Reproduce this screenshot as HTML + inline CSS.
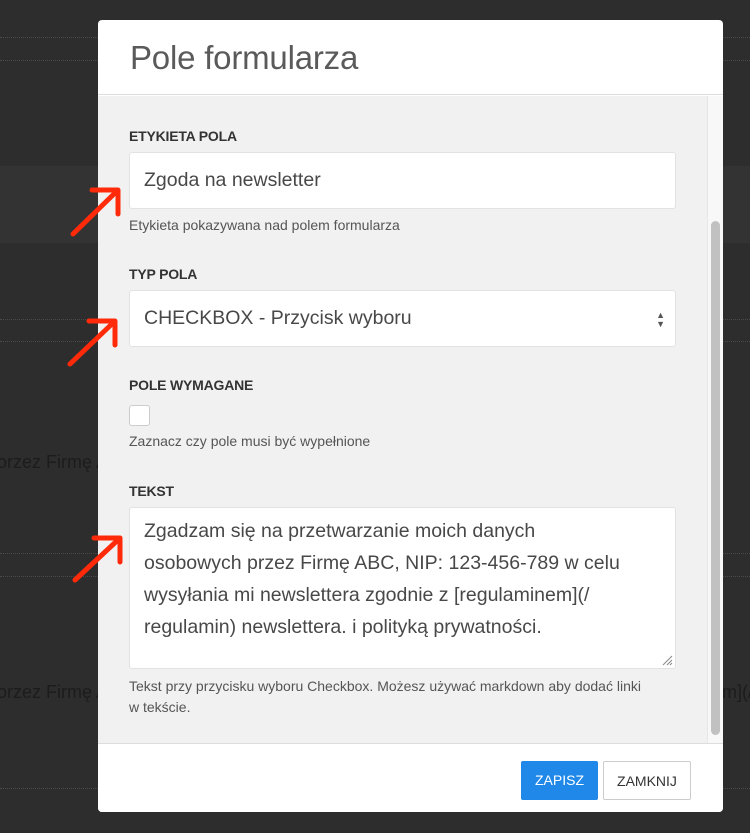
<!DOCTYPE html>
<html><head><meta charset="utf-8"><style>
*{box-sizing:border-box;margin:0;padding:0}
body{width:750px;height:833px;background:#2d2d2d;position:relative;overflow:hidden;font-family:"Liberation Sans","DejaVu Sans",sans-serif}
.dot{position:absolute;left:0;width:750px;border-top:1px dotted #4a4a4a}
.band{position:absolute;left:0;top:166px;width:750px;height:77px;background:#333}
.bgt{position:absolute;color:#1c1c1c;font-size:18px;white-space:nowrap}
.modal{position:absolute;left:98px;top:20px;width:625px;height:792px;background:#fff;border-radius:4px;overflow:hidden}
.hdr{height:75px;border-bottom:1px solid #ddd;padding:19px 32px}
.hdr h1{font-weight:normal;font-size:33px;color:#5a5a5a;letter-spacing:-0.2px}
.body{position:absolute;top:76px;left:0;width:625px;height:647px;background:#f1f1f1}
.sb{position:absolute;right:0;top:0;width:16px;height:647px;background:#f8f8f8;border-left:1px solid #e6e6e6}
.thumb{position:absolute;left:3px;top:125px;width:9px;height:514px;background:#c1c1c1;border-radius:5px}
.lbl{position:absolute;left:31px;font-size:14px;font-weight:bold;color:#333;letter-spacing:-0.2px}
.inp{position:absolute;left:31px;width:547px;background:#fff;border:1px solid #e2e2e2;border-radius:3px;font-size:19.5px;color:#484848;padding-left:14px;white-space:nowrap}
.help{position:absolute;left:31px;font-size:14px;color:#555;white-space:nowrap}
.ftr{position:absolute;top:723px;left:0;width:625px;height:69px;border-top:1px solid #ddd;background:#fff}
.btn{position:absolute;top:17px;height:39px;font-size:14px;line-height:39px;text-align:center;border-radius:2px}
</style></head><body>
<div class="band"></div>
<div class="dot" style="top:37px"></div><div class="dot" style="top:60px"></div>
<div class="dot" style="top:319px"></div><div class="dot" style="top:341px"></div>
<div class="dot" style="top:553px"></div><div class="dot" style="top:576px"></div>
<div class="dot" style="top:788px"></div>
<div class="bgt" style="left:-3px;top:452px">orzez Firmę A</div>
<div class="bgt" style="left:-3px;top:682px">orzez Firmę A</div>
<div class="bgt" style="left:722px;top:682px">m](/</div>
<div class="modal">
 <div class="hdr"><h1>Pole formularza</h1></div>
 <div class="body">
  <div class="lbl" style="top:32px">ETYKIETA POLA</div>
  <div class="inp" style="top:56px;height:57px;line-height:55px">Zgoda na newsletter</div>
  <div class="help" style="top:121px">Etykieta pokazywana nad polem formularza</div>
  <div class="lbl" style="top:170px">TYP POLA</div>
  <div class="inp" style="top:194px;height:57px;line-height:55px">CHECKBOX - Przycisk wyboru<span style="position:absolute;right:10px;font-size:9px;color:#555;line-height:9px;top:20px">▲<br>▼</span></div>
  <div class="lbl" style="top:281px">POLE WYMAGANE</div>
  <div style="position:absolute;left:31px;top:309px;width:21px;height:21px;background:#fff;border:1px solid #ccc;border-radius:3px"></div>
  <div class="help" style="top:337px">Zaznacz czy pole musi być wypełnione</div>
  <div class="lbl" style="top:387px">TEKST</div>
  <div class="inp" style="top:411px;height:162px;line-height:32px;padding-top:7px;font-size:19.5px">Zgadzam się na przetwarzanie moich danych<br>osobowych przez Firmę ABC, NIP: 123-456-789 w celu<br>wysyłania mi newslettera zgodnie z [regulaminem](/<br>regulamin) newslettera. i polityką prywatności.
   <svg style="position:absolute;right:2px;bottom:2px" width="12" height="12"><path d="M11 2L2 11M11 6L6 11M11 9L9 11" stroke="#888" stroke-width="1"/></svg></div>
  <div class="help" style="top:580px;line-height:21px">Tekst przy przycisku wyboru Checkbox. Możesz używać markdown aby dodać linki<br>w tekście.</div>
  <div class="sb"><div class="thumb"></div></div>
 </div>
 <div class="ftr">
  <div class="btn" style="left:423px;width:77px;background:#2088e8;color:#fff">ZAPISZ</div>
  <div class="btn" style="left:505px;width:88px;background:#fff;border:1px solid #ccc;color:#333">ZAMKNIJ</div>
 </div>
</div>
<svg style="position:absolute;left:0;top:0" width="750" height="833">
 <g stroke="#ff2a0a" stroke-width="5" stroke-linecap="round" stroke-linejoin="round" fill="none">
  <path d="M73 234L118 190M92 190H118V214"/>
  <path d="M70 364L115 321M89 321H115V345"/>
  <path d="M75 580L120 538M94 538H120V562"/>
 </g>
</svg>
</body></html>
